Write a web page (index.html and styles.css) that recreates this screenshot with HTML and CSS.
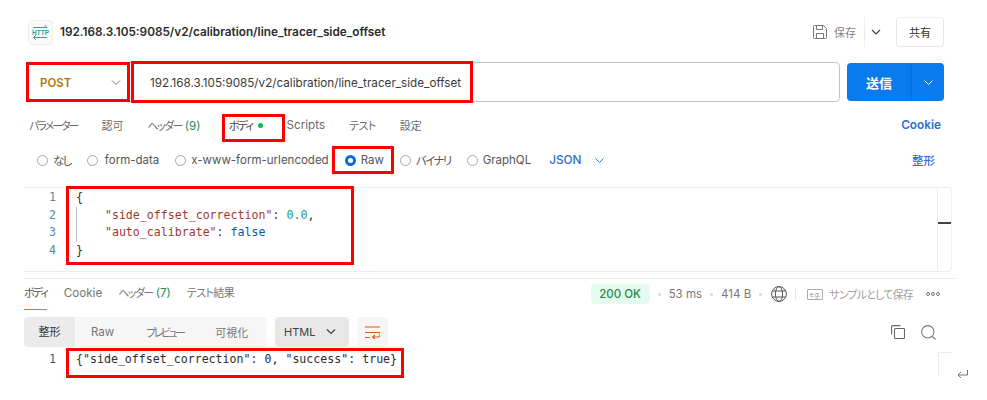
FILE: index.html
```html
<!DOCTYPE html>
<html lang="ja">
<head>
<meta charset="utf-8">
<title>Request</title>
<link rel="stylesheet" href="styles.css">
</head>
<body>
<div class="app">
  <header class="head">
    <span class="http-icon">
      <svg width="25" height="25" viewBox="0 0 25 25" fill="none" stroke="#3f9aa6" stroke-width="1">
        <path d="M5.500 7.500H19M16.500 5l2.500 2.500M5.500 17.500H19M8 15l-2.500 2.500M8 20l-2.500-2.500"/>
        <text x="12.500" y="14.600" text-anchor="middle" class="http-text">HTTP</text>
      </svg>
    </span>
    <span class="title">192.168.3.105:9085/v2/calibration/line_tracer_side_offset</span>
    <span class="head-actions">
      <svg class="save-icon" width="14" height="14" viewBox="0 0 14 14" fill="none" stroke="#777" stroke-width="1">
        <path d="M.5 1.500a1 1 0 0 1 1-1h9l3 3v9a1 1 0 0 1-1 1h-11a1 1 0 0 1-1-1zM3.500.5v4h6v-4M3.500 13.500v-5h7v5"/>
      </svg>
      <span class="save-label">保存</span>
      <span class="head-sep"></span>
      <svg class="head-chev" width="10" height="6" viewBox="0 0 10 6" fill="none" stroke="#444" stroke-width="1.200"><path d="M1 1l4 4 4-4"/></svg>
      <span class="share">共有</span>
    </span>
  </header>

  <section class="url-row">
    <div class="url-box">
      <span class="method">POST
        <svg width="10" height="6" viewBox="0 0 10 6" fill="none" stroke="#777" stroke-width="1"><path d="M1 .5l4 4 4-4"/></svg>
      </span>
      <span class="url">192.168.3.105:9085/v2/calibration/line_tracer_side_offset</span>
    </div>
    <div class="send">
      <span class="send-main">送信</span>
      <span class="send-drop"><svg width="9" height="5" viewBox="0 0 9 5" fill="none" stroke="#fff" stroke-width="1"><path d="M.5.5l4 4 4-4"/></svg></span>
    </div>
  </section>

  <nav class="tabs">
    <span class="kana-l">パラメーター</span>
    <span>認可</span>
    <span><span class="kana">ヘッダー</span> <em class="count">(9)</em></span>
    <span class="tab-body"><span class="kana">ボディ</span><i class="dot"></i></span>
    <span class="latin">Scripts</span>
    <span class="kana-s">テスト</span>
    <span>設定</span>
    <span class="link cookie">Cookie</span>
  </nav>

  <div class="radios">
    <span class="radio"><i class="mark"></i><span class="kana">なし</span></span>
    <span class="radio"><i class="mark"></i><span class="form-data">form-data</span></span>
    <span class="radio"><i class="mark"></i>x-www-form-urlencoded</span>
    <span class="radio"><i class="mark on"></i>Raw</span>
    <span class="radio"><i class="mark"></i><span class="kana">バイナリ</span></span>
    <span class="radio"><i class="mark"></i>GraphQL</span>
    <span class="link json">JSON
      <svg width="9" height="5" viewBox="0 0 9 5" fill="none" stroke="#2f6fd6" stroke-width="1"><path d="M.5.5l4 4 4-4"/></svg>
    </span>
    <span class="link format">整形</span>
  </div>

  <div class="editor">
    <div class="code">
      <div class="line"><span class="num">1</span><span class="src">{</span></div>
      <div class="line guide"><span class="num">2</span><span class="src">    <span class="key">"side_offset_correction"</span>: <span class="val">0.0</span>,</span></div>
      <div class="line guide"><span class="num">3</span><span class="src">    <span class="key">"auto_calibrate"</span>: <span class="bool">false</span></span></div>
      <div class="line"><span class="num">4</span><span class="src">}</span></div>
    </div>
    <div class="scroll"><i class="thumb"></i></div>
  </div>

  <div class="res-tabs">
    <span class="res-tab active"><span class="kana-l">ボディ</span></span>
    <span class="res-tab latin">Cookie</span>
    <span class="res-tab"><span class="kana">ヘッダー</span> <em class="count">(7)</em></span>
    <span class="res-tab kana-s">テスト結果</span>
    <span class="res-meta">
      <span class="status">200 OK</span>
      <i class="meta-dot"></i><span>53 ms</span>
      <i class="meta-dot"></i><span>414 B</span>
      <i class="meta-dot"></i>
      <svg class="globe" width="16" height="16" viewBox="0 0 16 16" fill="none" stroke="#555" stroke-width="1">
        <circle cx="8" cy="8" r="7.400"/><ellipse cx="8" cy="8" rx="3.600" ry="7.400"/><path d="M1.500 5h13M1.500 11h13"/>
      </svg>
      <i class="meta-sep"></i>
      <span class="eg">e.g.</span>
      <span class="sample">サンプルとして保存</span>
      <span class="more"><i></i><i></i><i></i></span>
    </span>
  </div>

  <div class="res-tools">
    <div class="seg">
      <span class="seg-item on">整形</span>
      <span class="seg-item raw">Raw</span>
      <span class="seg-item preview">プレビュー</span>
      <span class="seg-item vis">可視化</span>
    </div>
    <span class="lang">HTML
      <svg width="10" height="6" viewBox="0 0 10 6" fill="none" stroke="#444" stroke-width="1.200"><path d="M1 .5l4 4 4-4"/></svg>
    </span>
    <span class="wrap-btn">
      <svg width="15" height="13" viewBox="0 0 15 13" fill="none" stroke="#e2562c" stroke-width="1.100">
        <path d="M0 1h15M0 6.500h15M0 11.500h5M15 6.500v2.500a2 2 0 0 1-2 2H7.500M10 9l-2.500 2 2.500 2"/>
      </svg>
    </span>
    <span class="tool-icons">
      <svg width="14" height="14" viewBox="0 0 14 14" fill="none" stroke="#666" stroke-width="1.100">
        <rect x="3.500" y="3.500" width="10" height="10" rx="1"/><path d="M.6 9.500V1.600a1 1 0 0 1 1-1h7.900"/>
      </svg>
      <svg width="15" height="15" viewBox="0 0 15 15" fill="none" stroke="#777" stroke-width="1.100">
        <circle cx="6.800" cy="6.800" r="6.200"/><path d="M11.300 11.300l3.200 3.200"/>
      </svg>
    </span>
  </div>

  <div class="response">
    <div class="line"><span class="num dark">1</span><span class="src">{"side_offset_correction": 0, "success": true}</span></div>
    <div class="res-scroll"></div>
    <svg class="enter" width="11" height="9" viewBox="0 0 11 9" fill="none" stroke="#777" stroke-width="1"><path d="M10.500 0v5H1M4 2L1 5l3 3"/></svg>
  </div>

  <i class="note n-method"></i>
  <i class="note n-url"></i>
  <i class="note n-tab"></i>
  <i class="note n-raw"></i>
  <i class="note n-code"></i>
  <i class="note n-res"></i>
</div>
</body>
</html>
```
FILE: styles.css
```css
* { box-sizing: border-box; }
html, body { margin: 0; padding: 0; background: #fff; overflow: hidden; }
em, i { font-style: normal; }
.app {
  position: relative;
  width: 987px;
  height: 400px;
  font-family: Inter, "Noto Sans CJK JP", sans-serif;
  font-size: 11px;
  font-feature-settings: "palt";
  color: #6b6b6b;
  overflow: hidden;
}
.kana { letter-spacing: -1.600px; }
.kana-l { letter-spacing: -2px; }
.kana-s { letter-spacing: -.6px; }
.latin { font-size: 11.700px; }

/* header */
.head { display: flex; align-items: center; height: 30px; margin: 17px 43px 0 28px; }
.http-icon { width: 25px; height: 25px; border: 1px solid #efefef; border-radius: 4px; background: #fafafa; display: flex; align-items: center; justify-content: center; flex: none; }
.http-icon svg { margin: -1px; }
.http-text { font: 700 6.500px "Liberation Sans", sans-serif; fill: #3f9aa6; stroke: none; }
.title { margin-left: 7px; font-size: 11.770px; font-weight: 600; color: #2b2b2b; }
.head-actions { margin-left: auto; display: flex; align-items: center; height: 30px; }
.save-icon { margin-right: 7px; }
.save-label { color: #808080; font-size: 11px; width: 23px; }
.head-sep { width: 1px; height: 30px; background: #ededed; margin: 0 6px 0 7px; }
.head-chev { margin: 0 15px 0 0; }
.share { width: 48px; height: 30px; border: 1px solid #e6e6e6; border-top-color: #f2f2f2; border-radius: 4px; display: flex; align-items: center; justify-content: center; color: #333; font-size: 11px; }

/* url bar */
.url-row { display: flex; height: 40px; margin: 15px 43px 0 27px; gap: 7px; }
.url-box { flex: 1; display: flex; align-items: center; padding-top: 1px; border: 1px solid #c4c4c4; border-radius: 4px; }
.method { width: 103px; padding: 0 10px 0 12px; display: flex; align-items: center; justify-content: space-between; color: #ad7a03; font-size: 11.500px; font-weight: 600; }
.url { margin-left: 19px; font-size: 11.700px; color: #3a3a3a; }
.send { width: 97px; height: 38px; margin-top: 1px; display: flex; border-radius: 4px; background: #097bed; color: #fff; }
.send-main { width: 65px; display: flex; align-items: center; justify-content: center; font-size: 13px; font-weight: 700; border-right: 1px solid #0a6fd4; }
.send-drop { flex: 1; display: flex; align-items: center; justify-content: center; }

/* request tabs */
.tabs { display: flex; align-items: center; gap: 24px; height: 22px; margin: 12px 46px 0 29px; }
.count { color: #2b8a5c; font-size: 11.700px; }
.tab-body { display: inline-flex; align-items: center; color: #444; margin-left: 4px; margin-right: -1px; }
.dot { width: 5px; height: 5px; border-radius: 50%; background: #0cbb52; margin-left: 6px; }
.link { color: #2d6fd2; font-weight: 500; }
.cookie { margin-left: auto; font-weight: 600; font-size: 11.800px; }

/* radio row */
.radios { display: flex; align-items: center; height: 22px; margin: 13px 52px 0 37px; gap: 16px; }
.radio { display: inline-flex; align-items: center; gap: 5px; color: #555; font-size: 11.500px; }
.form-data { margin-left: 2px; }
.mark { width: 11px; height: 11px; border: 1px solid #a8a8a8; border-radius: 50%; flex: none; }
.mark.on { border: 3px solid #0b6fd6; }
.json { margin-left: 2px; display: inline-flex; align-items: center; gap: 13px; font-size: 11.800px; }
.format { margin-left: auto; font-size: 11.500px; }

/* request editor */
.editor { display: flex; height: 85px; margin: 16px 35px 0 24px; border-top: 1px solid #ececec; border-bottom: 1px solid #ececec; border-right: 1px solid #f0f0f0; border-radius: 0 4px 4px 0; }
.code { flex: 1; padding-top: 1px; }
.line { display: flex; height: 17.500px; font: 11.600px/17.500px "DejaVu Sans Mono", monospace; color: #333; }
.num { width: 32px; text-align: right; color: #4d8ba8; flex: none; }
.num.dark { color: #3c5a74; }
.src { margin-left: 20px; white-space: pre; }
.guide .src { border-left: 1px solid #c0c0c0; }
.key { color: #a2382f; }
.val { color: #1a9c8c; }
.bool { color: #0b55a8; }
.scroll { position: relative; width: 14px; border-left: 1px solid #ececec; }
.thumb { position: absolute; left: 0; right: 0; top: 34px; height: 2px; background: #444; }

/* response tabs */
.res-tabs { display: flex; align-items: center; height: 31px; margin: 6px 31px 0 24px; border-top: 1px solid #ececec; gap: 16px; }
.res-tab { color: #777; height: 31px; line-height: 29px; }
.res-tab.active { color: #555; position: relative; margin-right: 1px; }
.res-tab.active::after { content: ""; position: absolute; left: 0; right: 0; bottom: 0; height: 1px; background: #f26b3a; }
.res-meta { margin-left: auto; padding-right: 16px; display: flex; align-items: center; color: #777; font-size: 11.500px; }
.status { width: 59px; height: 20px; line-height: 20px; text-align: center; border-radius: 4px; background: #e6fbef; color: #1f8a50; font-weight: 500; }
.meta-dot { width: 3px; height: 3px; border-radius: 50%; background: #d8d8d8; margin-right: 8px; }
.res-meta span + .meta-dot { margin-left: 8px; }
.globe { margin-left: 1px; }
.meta-sep { width: 1px; height: 12px; background: #e6e6e6; margin: 0 11px 0 8px; }
.eg { width: 16px; height: 11px; border: 1px solid #aaa; border-radius: 1px; font-size: 6px; line-height: 9px; text-align: center; color: #888; }
.sample { margin-left: 6px; color: #a0a0a0; font-size: 11px; letter-spacing: -.8px; }
.more { display: flex; gap: 1px; margin-left: 13px; }
.more i { width: 4px; height: 4px; border: 1px solid #777; border-radius: 50%; }

/* response toolbar */
.res-tools { display: flex; align-items: center; height: 30px; margin: 8px 51px 0 24px; }
.seg { display: flex; align-items: center; width: 243px; height: 30px; background: #f6f6f6; border-radius: 4px; color: #777; }
.seg-item.on { width: 51px; height: 30px; line-height: 30px; text-align: center; background: #ebebeb; color: #333; border-radius: 4px 0 0 4px; }
.seg-item.raw { margin-left: 16px; font-size: 11.500px; }
.seg-item.preview { margin-left: 32px; letter-spacing: -2.600px; }
.seg-item.vis { margin-left: 32px; }
.lang { width: 74px; height: 30px; margin-left: 8px; padding: 0 13px 0 9px; background: #e8e8e8; border-radius: 4px; display: flex; align-items: center; justify-content: space-between; color: #444; font-size: 11px; }
.wrap-btn { width: 31px; height: 30px; margin-left: 8px; background: #f6f6f6; border-radius: 4px; display: flex; align-items: center; justify-content: center; }
.tool-icons { margin-left: auto; display: flex; align-items: center; gap: 16px; }

/* response body */
.response { position: relative; margin: 4px 0 0 24px; height: 30px; }
.response .src { color: #2b2b2b; }
.res-scroll { position: absolute; left: 914px; top: 1px; width: 14px; height: 24px; border-left: 1px solid #ececec; border-top: 1px solid #ececec; }
.enter { position: absolute; left: 933px; top: 19px; }

/* red annotation frames drawn over the screenshot */
.note { position: absolute; border: 3px solid #f00; pointer-events: none; }
.n-method { left: 26px; top: 62px; width: 104px; height: 40px; }
.n-url { left: 131px; top: 61px; width: 342px; height: 42px; }
.n-tab { left: 222px; top: 114px; width: 63px; height: 28px; }
.n-raw { left: 332px; top: 146px; width: 62px; height: 28px; }
.n-code { left: 66px; top: 186px; width: 288px; height: 79px; }
.n-res { left: 66px; top: 348px; width: 338px; height: 30px; }
```
